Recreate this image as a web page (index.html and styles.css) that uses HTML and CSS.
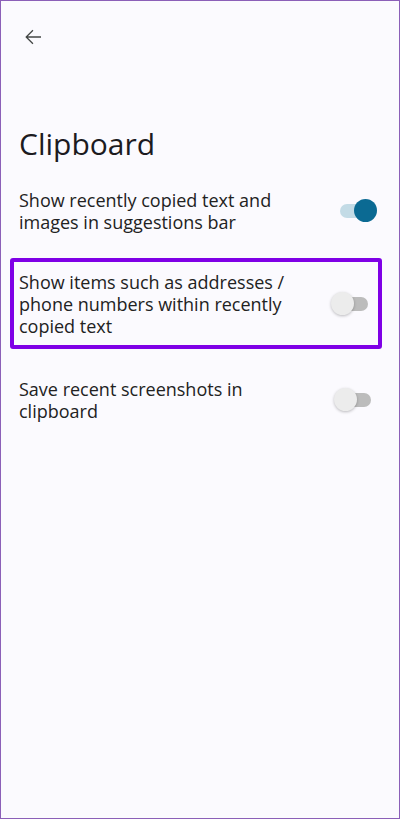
FILE: index.html
```html
<!DOCTYPE html>
<html>
<head>
    <title>Clipboard</title>
    <link rel="stylesheet" href="styles.css">
</head>
<body>
    <div class="screen">
        <div class="top-bar">
            <svg class="back-icon" width="24" height="24" viewBox="0 0 24 24">
                <path d="M20 11.2H6.9l5.5-5.5-0.9-0.9L4.5 11.8l0 0.4 7 7 0.9-0.9-5.5-5.5H20v-1.6z" fill="#444746"/>
            </svg>
        </div>
        <h1 class="title">Clipboard</h1>

        <div class="setting">
            <div class="setting-text">Show recently copied text and images in suggestions bar</div>
            <div class="switch on"><span class="thumb"></span></div>
        </div>

        <div class="highlight">
            <div class="setting">
                <div class="setting-text">Show items such as addresses / phone numbers within recently copied text</div>
                <div class="switch"><span class="thumb"></span></div>
            </div>
        </div>

        <div class="setting last">
            <div class="setting-text">Save recent screenshots in clipboard</div>
            <div class="switch"><span class="thumb"></span></div>
        </div>
    </div>
</body>
</html>
```

FILE: styles.css
```css
body {
    margin: 0;
    padding: 0;
    font-family: "Open Sans", Roboto, sans-serif;
    background-color: #fbfafe;
}
.screen {
    box-sizing: border-box;
    width: 400px;
    height: 819px;
    border: 1px solid #8b5fb8;
    background-color: #fbfafe;
    color: #1f1f1f;
}
.top-bar {
    height: 72px;
    padding-left: 20px;
    display: flex;
    align-items: center;
}
.back-icon {
    display: block;
}
.title {
    margin: 53px 0 0 18px;
    font-size: 30px;
    font-weight: 400;
    line-height: 36px;
    color: #1c1b1f;
}
.setting {
    display: flex;
    align-items: center;
    justify-content: space-between;
    padding: 0 28px 0 18px;
    margin-top: 27px;
}
.setting-text {
    width: 295px;
    font-size: 18px;
    line-height: 22px;
    color: #222;
}
.highlight {
    margin: 25px 17px 0 9px;
    border: 4px solid #7f00e6;
    border-radius: 3px;
    padding: 9px 0 8px;
}
.highlight .setting {
    margin-top: 0;
    padding: 0 10px 0 5px;
}
.setting.last {
    margin-top: 29px;
}
.switch {
    position: relative;
    width: 31px;
    height: 14px;
    border-radius: 7px;
    background-color: #bcbcbc;
    flex-shrink: 0;
}
.switch .thumb {
    position: absolute;
    top: -5px;
    left: -6px;
    width: 23px;
    height: 23px;
    border-radius: 50%;
    background-color: #ececec;
    box-shadow: 0 1px 3px rgba(0, 0, 0, 0.25);
}
.switch.on {
    background-color: #c3dbe6;
}
.switch.on .thumb {
    left: auto;
    right: -6px;
    background-color: #0b6a93;
    box-shadow: none;
}
```
